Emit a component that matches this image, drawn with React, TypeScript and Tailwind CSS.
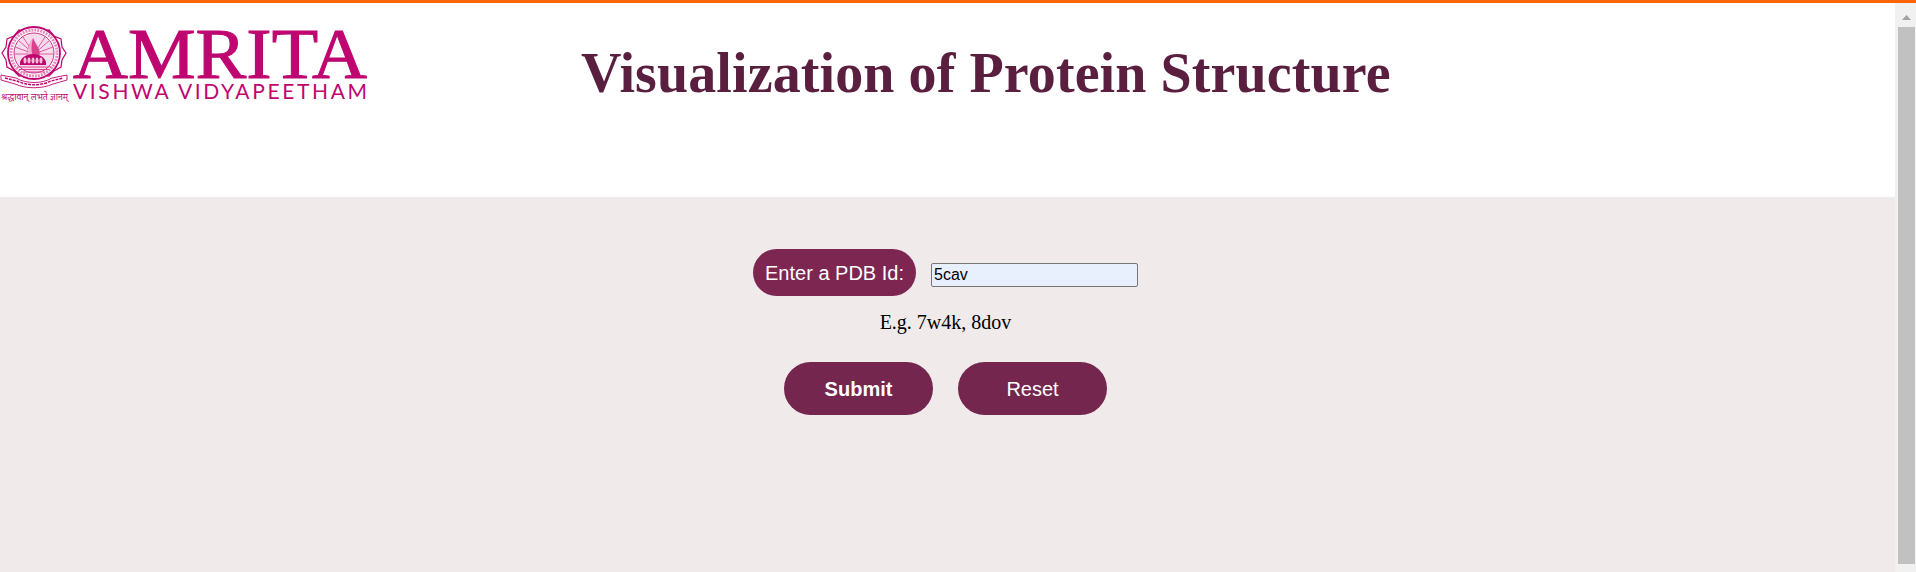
const M = "#bf0670";

function Logo() {
  return (
    <svg width="370" height="96" viewBox="0 10 370 96" className="block shrink-0">
      <path d="M34 28 L41 31 L49 30 L54 36 L61 39 L62 47 L66 53 L62 60 L61 67 L54 71 L49 76 L41 75 L34 78 L27 75 L19 76 L14 71 L7 67 L6 60 L2 53 L6 47 L7 39 L14 36 L19 30 L27 31 Z" fill="#fff" stroke={M} strokeWidth="1.2" />
      <circle cx="34" cy="53" r="26" fill="#fff" stroke={M} strokeWidth="1.8" />
      <circle cx="34" cy="53" r="23" fill="none" stroke="#e58fbf" strokeWidth="3" strokeDasharray="2 1" />
      <circle cx="34" cy="53" r="20" fill="#f9dceb" stroke={M} strokeWidth="0.8" />
      <g stroke="#e05aa3" strokeWidth="1">
        <path d="M34 54 L15 47 M34 54 L18 40 M34 54 L23 37 M34 54 L45 37 M34 54 L50 40 M34 54 L53 47 M34 54 L14 54 M34 54 L54 54" />
      </g>
      <path d="M33 38 C28 45 26 52 29 56 L39 56 C42 51 36 45 33 38 Z" fill="#d9418f" />
      <path d="M33 38 C31 45 31 52 33 56 L29 56 C26 52 29 44 33 38 Z" fill="#fff" opacity="0.6" />
      <path d="M20 65 C19 59 25 54 33 54 C41 54 47 59 46 65 Z" fill={M} />
      <g fill="#f7bfdc">
        <ellipse cx="25" cy="60.5" rx="1.5" ry="3" />
        <ellipse cx="29" cy="60.5" rx="1.5" ry="3" />
        <ellipse cx="33" cy="60.5" rx="1.5" ry="3" />
        <ellipse cx="37" cy="60.5" rx="1.5" ry="3" />
        <ellipse cx="41" cy="60.5" rx="1.5" ry="3" />
      </g>
      <g stroke="#d9418f" strokeWidth="1">
        <path d="M17 67 H51 M19 69.5 H49 M23 72 H45" />
      </g>
      <path d="M1 75 L16 78 C26 84 42 84 52 78 L67 75 L67 80 L53 84 C42 89 26 89 15 84 L1 80 Z" fill="#fff" stroke={M} strokeWidth="0.9" />
      <path d="M5 78 L17 81 C27 86 41 86 51 81 L63 78" fill="none" stroke={M} strokeWidth="1.5" strokeDasharray="3 1" />
      <text x="1" y="100" fontFamily="'Noto Sans','Liberation Sans',sans-serif" fontSize="9" fill={M} textLength="67" lengthAdjust="spacingAndGlyphs">श्रद्धावान् लभते ज्ञानम्</text>
      <text x="73" y="78" fontFamily="'Liberation Serif',serif" fontSize="72" fill={M} stroke={M} strokeWidth="1" textLength="294" lengthAdjust="spacingAndGlyphs">AMRITA</text>
      <text x="73" y="99" fontFamily="Lato,'Liberation Sans',sans-serif" fontWeight="400" fontSize="21" fill={M} textLength="294" lengthAdjust="spacing">VISHWA VIDYAPEETHAM</text>
    </svg>
  );
}

function Scrollbar() {
  return (
    <aside className="w-[21px] shrink-0 bg-[#f1f1f1] flex flex-col items-center">
      <svg width="9" height="5" viewBox="0 0 9 5" className="mt-[12px] mb-[7px] ml-[1px] block">
        <path d="M4.5 0 L9 5 H0 Z" fill="#a3a3a3" />
      </svg>
      <div className="w-[17px] h-[537px] ml-[1px] bg-[#c1c1c1]" />
    </aside>
  );
}

export default function App() {
  return (
    <div className="h-[572px] w-full overflow-hidden flex flex-col bg-white font-['Liberation_Sans',Arial,sans-serif]">
      <div className="h-[3px] shrink-0 bg-[#ff6600]" />
      <div className="flex flex-1 min-h-0">
        <div className="flex-1 min-w-0 flex flex-col">
          <header className="h-[194px] shrink-0 bg-white flex items-start pt-[7px]">
            <Logo />
            <h1 className="ml-[211px] mt-[33px] font-['Liberation_Serif',serif] font-bold text-[56px] leading-[60px] tracking-[0.1px] text-[#5a1f3f] whitespace-nowrap">
              Visualization of Protein Structure
            </h1>
          </header>
          <main className="flex-1 bg-[#f0eaea] flex flex-col items-center pt-[52px] pr-[4px]">
            <div className="flex items-center gap-[15px]">
              <label className="h-[47px] w-[163px] rounded-[24px] bg-[#7e2652] text-white text-[20px] flex items-center justify-center">
                Enter a PDB Id:
              </label>
              <input
                defaultValue="5cav"
                className="mt-[4px] h-[24px] w-[207px] bg-[#e8f0fe] border border-[#767676] rounded-[2px] px-[2px] text-[16px] text-black outline-none"
              />
            </div>
            <p className="mt-[15px] h-[22px] font-['Liberation_Serif',serif] text-[20px] leading-[22px] text-black">
              E.g. 7w4k, 8dov
            </p>
            <div className="mt-[29px] flex gap-[25px]">
              <button className="h-[53px] w-[149px] rounded-[27px] bg-[#74264e] text-white text-[20px] font-bold">
                Submit
              </button>
              <button className="h-[53px] w-[149px] rounded-[27px] bg-[#74264e] text-white text-[20px]">
                Reset
              </button>
            </div>
          </main>
        </div>
        <Scrollbar />
      </div>
    </div>
  );
}
